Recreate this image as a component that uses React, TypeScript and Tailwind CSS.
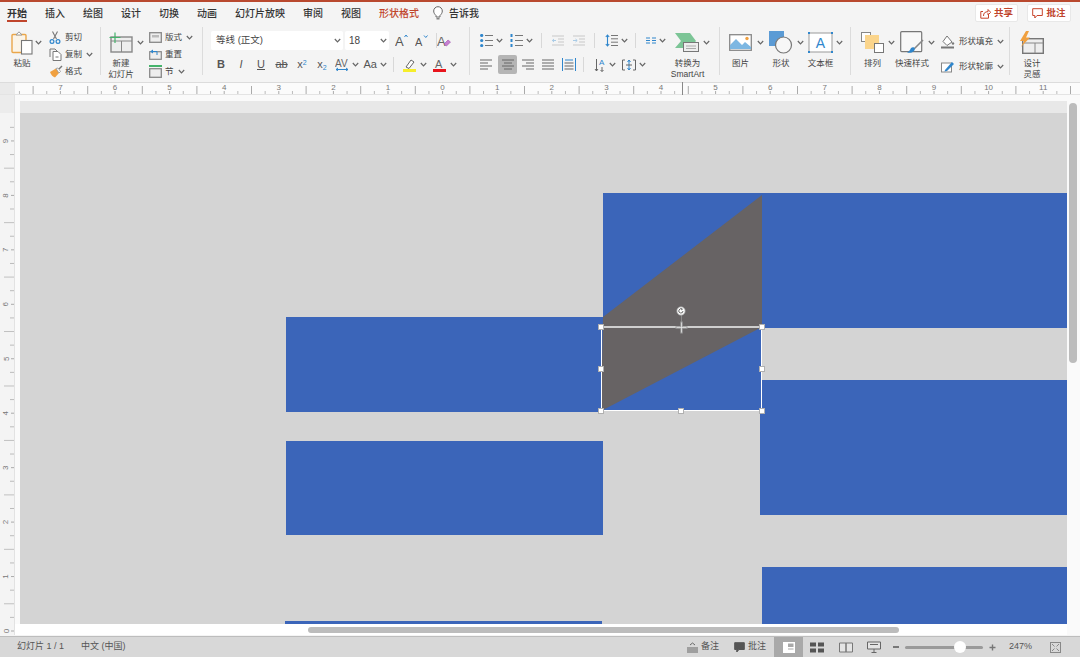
import React from "react";

const FONT = { fontFamily: '"Liberation Sans","Noto Sans CJK SC",sans-serif' };
const BLUE = "#2f86cc";
const G = "#777";

const Chev = ({ className = "", color = "#666" }: { className?: string; color?: string }) => (
  <svg width="7" height="5" viewBox="0 0 7 5" className={`shrink-0 ${className}`}>
    <path d="M0.8 1 L3.5 3.8 L6.2 1" fill="none" stroke={color} strokeWidth="1.2" />
  </svg>
);

const Ic = ({ w, h, children, className = "" }: { w: number; h: number; children: React.ReactNode; className?: string }) => (
  <svg width={w} height={h} viewBox={`0 0 ${w} ${h}`} className={`shrink-0 ${className}`}>
    {children}
  </svg>
);

/* ---- ribbon icons ---- */
const Paste = () => (
  <Ic w={22} h={24}>
    <rect x="1" y="3.5" width="14" height="18" rx="1" fill="#fbf4e8" stroke="#eaa64a" strokeWidth="1.4" />
    <path d="M5 4 L8 0.8 L11 4 Z" fill="#fff" stroke="#999" />
    <rect x="10.5" y="9.5" width="10.5" height="13.5" fill="#fff" stroke="#777" strokeWidth="1.1" />
  </Ic>
);
const Scissors = () => (
  <Ic w={12} h={13}>
    <path d="M3.5 0.5 L7.5 8 M8.5 0.5 L4.5 8" stroke="#777" strokeWidth="1.1" fill="none" />
    <circle cx="3" cy="10.5" r="1.9" fill="none" stroke={BLUE} strokeWidth="1.2" />
    <circle cx="9" cy="10.5" r="1.9" fill="none" stroke={BLUE} strokeWidth="1.2" />
  </Ic>
);
const Copy = () => (
  <Ic w={13} h={13}>
    <path d="M1 9 V1 H6 L8 3" fill="none" stroke="#777" />
    <path d="M4 3.5 H9 L12 6.5 V12.5 H4 Z" fill="#fff" stroke="#777" />
    <path d="M6.5 9 H9.5" stroke="#777" />
  </Ic>
);
const Painter = () => (
  <Ic w={14} h={13}>
    <path d="M1 7 L7 3.5 L10 8 L6 12.5 C4 12 2 10 1 7 Z" fill="#f0a040" />
    <path d="M7 3.5 L10 8 L11.5 6.5 L9 3 Z" fill="#fff" stroke="#888" strokeWidth="0.7" />
    <path d="M10 4 L13 1" stroke="#777" strokeWidth="1.5" />
  </Ic>
);
const NewSlide = () => (
  <Ic w={24} h={21}>
    <rect x="2" y="5" width="21" height="15" fill="#eee" stroke="#888" strokeWidth="1.4" />
    <path d="M2 9 H23 M12.5 9 V20" stroke="#888" />
    <path d="M6 0.5 V11 M0.5 5.5 H11.5" stroke="#45b36b" strokeWidth="1.2" />
  </Ic>
);
const Layout = () => (
  <Ic w={13} h={11}>
    <rect x="0.7" y="0.7" width="11.6" height="9.6" fill="#eee" stroke="#888" strokeWidth="1.3" />
    <rect x="3" y="3" width="7" height="2.5" fill="#bbb" />
  </Ic>
);
const Reset = () => (
  <Ic w={13} h={11}>
    <rect x="0.7" y="2.7" width="11.6" height="7.6" fill="#eee" stroke="#888" strokeWidth="1.2" />
    <path d="M1 2.5 L4 0.5 V4.5 Z" fill={BLUE} />
    <path d="M3 2.5 H8 V6" fill="none" stroke={BLUE} />
  </Ic>
);
const Section = () => (
  <Ic w={13} h={13}>
    <rect x="0.7" y="3.7" width="11.6" height="8.6" fill="#eee" stroke="#888" strokeWidth="1.3" />
    <rect x="0" y="0" width="13" height="2" fill="#45b36b" />
  </Ic>
);
const FontUp = ({ up }: { up: boolean }) => (
  <Ic w={13} h={13}>
    <text x="0" y={up ? 12 : 12} fontSize={up ? 13 : 11} fill="#555" fontFamily="Liberation Sans">A</text>
    <path d={up ? "M9.5 3 L11 1 L12.5 3" : "M9 1.5 L10.8 3.5 L12.5 1.5"} fill="none" stroke={BLUE} strokeWidth="1" />
  </Ic>
);
const ClearFmt = () => (
  <Ic w={14} h={13}>
    <text x="0" y="11.5" fontSize="13" fill="#666" fontFamily="Liberation Sans">A</text>
    <path d="M7 10 L11 6 L13.5 8 L9.5 12 Z" fill="#c77fd0" stroke="#a050b0" strokeWidth="0.6" />
  </Ic>
);
const Bullets = ({ num = false }: { num?: boolean }) => (
  <Ic w={13} h={13}>
    {[1.5, 6.5, 11.5].map((y) => (
      <g key={y}>
        {num ? <rect x="0.5" y={y - 1.5} width="2" height="3" fill={BLUE} /> : <circle cx="1.7" cy={y} r="1.6" fill={BLUE} />}
        <path d={`M5 ${y} H13`} stroke="#777" strokeWidth="1" />
      </g>
    ))}
  </Ic>
);
const Indent = ({ right = false }: { right?: boolean }) => (
  <Ic w={12} h={11}>
    <path d="M0 1 H12 M6 4 H12 M6 7 H12 M0 10 H12" stroke="#c8c8c8" strokeWidth="1" />
    <path d={right ? "M0 5.5 H4 M2.5 4 L4.2 5.5 L2.5 7" : "M4 5.5 H0.5 M2 4 L0.3 5.5 L2 7"} stroke="#a8cbe6" fill="none" />
  </Ic>
);
const LineSpace = () => (
  <Ic w={13} h={13}>
    <path d="M2.5 1 V12 M0.8 3 L2.5 1 L4.2 3 M0.8 10 L2.5 12 L4.2 10" fill="none" stroke={BLUE} strokeWidth="1.1" />
    <path d="M6 1.5 H13 M6 4.8 H13 M6 8.2 H13 M6 11.5 H13" stroke="#777" />
  </Ic>
);
const Cols = () => (
  <Ic w={10} h={7}>
    <path d="M0 1 H4 M0 3.5 H4 M0 6 H4 M6 1 H10 M6 3.5 H10 M6 6 H10" stroke={BLUE} />
  </Ic>
);
const SmartArt = () => (
  <Ic w={25} h={19}>
    <path d="M0 0 H15 L21 8 L15 15 H0 L6 8 Z" fill="#7cc596" />
    <rect x="8.5" y="9.5" width="15" height="9" fill="#eee" stroke="#777" />
    <path d="M11 13 H21 M11 15.5 H21" stroke="#aaa" />
  </Ic>
);
const Align = ({ kind }: { kind: "l" | "c" | "r" | "j" }) => {
  const rows = [0, 1, 2, 3];
  return (
    <Ic w={12} h={11}>
      {rows.map((i) => {
        const short = i % 2 === 1 && kind !== "j";
        const w = short ? 8 : 12;
        const x = kind === "r" ? 12 - w : kind === "c" ? (12 - w) / 2 : 0;
        return <path key={i} d={`M${x} ${1 + i * 3} h${w}`} stroke="#666" strokeWidth="1" />;
      })}
    </Ic>
  );
};
const Distribute = () => (
  <Ic w={14} h={13}>
    <path d="M0.5 0 V13 M13.5 0 V13" stroke={BLUE} />
    <path d="M3 2 H11" stroke={BLUE} />
    <path d="M2.5 5 H11.5 M2.5 8 H11.5 M2.5 11 H11.5" stroke="#666" />
  </Ic>
);
const TextDir = () => (
  <Ic w={12} h={14}>
    <path d="M2.5 1 V13 M1 11 L2.5 13 L4 11" fill="none" stroke="#666" />
    <text x="5" y="7" fontSize="8" fill={BLUE} fontFamily="Liberation Sans">A</text>
    <path d="M8 9 V13.5 M6.5 12 L8 13.5 L9.5 12" fill="none" stroke="#666" />
  </Ic>
);
const AlignText = () => (
  <Ic w={14} h={12}>
    <path d="M3 1 H0.5 V11 H3 M11 1 H13.5 V11 H11" fill="none" stroke="#666" />
    <path d="M7 1 V11 M5.5 3 L7 1 L8.5 3 M5.5 9 L7 11 L8.5 9" fill="none" stroke={BLUE} />
    <path d="M4 6 H10" stroke="#666" />
  </Ic>
);
const Picture = () => (
  <Ic w={23} h={17}>
    <rect x="0.7" y="0.7" width="21.6" height="15.6" fill="#fff" stroke="#888" strokeWidth="1.3" />
    <path d="M1 15 V11 L7 5 L13 11 L16 8 L22 13 V15 Z" fill="#7db7e2" />
    <circle cx="18" cy="4.5" r="1.7" fill="#f0a040" />
  </Ic>
);
const Shape = () => (
  <Ic w={24} h={23}>
    <rect x="0" y="0" width="15" height="15" fill="#5b9bd5" />
    <circle cx="14.5" cy="14" r="8" fill="#f7f7f7" stroke="#777" strokeWidth="1.2" />
  </Ic>
);
const TextBox = () => (
  <Ic w={25} h={21}>
    <rect x="1" y="1" width="23" height="19" fill="#fff" stroke="#999" />
    {[[1, 1], [24, 1], [1, 20], [24, 20]].map(([x, y]) => (
      <rect key={`${x}${y}`} x={x - 1} y={y - 1} width="2" height="2" fill={BLUE} />
    ))}
    <text x="12.5" y="16" textAnchor="middle" fontSize="14" fill={BLUE} fontFamily="Liberation Sans">A</text>
  </Ic>
);
const Arrange = () => (
  <Ic w={23} h={21}>
    <rect x="0.5" y="0.5" width="9" height="9" fill="#fff" stroke="#888" />
    <rect x="4" y="3" width="14" height="14" fill="#fbd58c" />
    <rect x="13.5" y="11.5" width="9" height="9" fill="#fff" stroke="#777" />
  </Ic>
);
const QuickStyle = () => (
  <Ic w={24} h={23}>
    <rect x="0.7" y="0.7" width="21" height="20" rx="1" fill="#f8f8f8" stroke="#777" strokeWidth="1.2" />
    <path d="M23 9 L14 18" stroke="#888" strokeWidth="1.6" />
    <path d="M11 17 C14 15 16 18 14 20 C12 22 9 22 7 21.5 C9 21 10 19 11 17 Z" fill={BLUE} />
  </Ic>
);
const Fill = () => (
  <Ic w={14} h={14}>
    <path d="M6 1 L11 7 L6 10.5 L2 6.5 Z" fill="#fff" stroke="#777" />
    <circle cx="12" cy="8.5" r="1.2" fill="#777" />
    <rect x="0" y="11.5" width="13" height="2" fill="#777" />
  </Ic>
);
const Outline = () => (
  <Ic w={14} h={13}>
    <rect x="0.5" y="3" width="10" height="9" fill="#fff" stroke="#888" />
    <path d="M4 10 L11 2 L13 4 L6 11 L3.5 11.5 Z" fill={BLUE} />
  </Ic>
);
const Ideas = () => (
  <Ic w={24} h={23}>
    <rect x="2.7" y="7.7" width="20.6" height="14.6" fill="#eee" stroke="#777" strokeWidth="1.4" />
    <path d="M4 12 H23 M15 12 V22" stroke="#888" />
    <path d="M6 0 L0 10 H4 L1 16 L10 6.5 H6 L9 0 Z" fill="#f0a040" />
  </Ic>
);
const Bulb = () => (
  <Ic w={10} h={14}>
    <path d="M3 9.5 C1.5 8 0.7 6.8 0.7 5 A4.3 4.3 0 0 1 9.3 5 C9.3 6.8 8.5 8 7 9.5 V11 H3 Z" fill="#fff" stroke="#666" />
    <path d="M3.5 12.8 H6.5" stroke="#666" strokeWidth="1.2" />
  </Ic>
);
const ShareIc = () => (
  <Ic w={11} h={11}>
    <path d="M3 3.5 H0.8 V10.2 H8.5 V7" fill="none" stroke="#c8452c" />
    <path d="M3.5 8 C3.5 5 5 3.7 8 3.7 V1.5 L10.7 4.3 L8 7 V5" fill="none" stroke="#c8452c" />
  </Ic>
);
const CommentIc = ({ color = "#c8452c", solid = false }: { color?: string; solid?: boolean }) => (
  <Ic w={11} h={11}>
    <path d="M0.7 0.7 H10.3 V7.5 H5 L2.8 10 V7.5 H0.7 Z" fill={solid ? color : "none"} stroke={color} />
  </Ic>
);

/* ---- ribbon layout helpers ---- */
const Sep = () => <div className="w-px h-[48px] bg-[#dcdcdc] shrink-0" />;
const Vsep = ({ className = "" }: { className?: string }) => <div className={`w-px h-[15px] bg-[#d8d8d8] shrink-0 ${className}`} />;

const Big = ({ w, icon, label, chevMl = "ml-[3px]", className = "" }: { w: string; icon: React.ReactNode; label: string[]; chevMl?: string; className?: string }) => (
  <div className={`flex shrink-0 ${className}`}>
    <div className={`flex flex-col items-center ${w}`}>
      <div className="h-[25px] flex items-center">{icon}</div>
      <div className="mt-[3px] flex flex-col items-center text-[8.5px] leading-[11px] text-[#444] whitespace-nowrap">
        {label.map((l) => (
          <span key={l}>{l}</span>
        ))}
      </div>
    </div>
    {chevMl !== "none" && (
      <div className={`h-[25px] flex items-center ${chevMl}`}>
        <Chev />
      </div>
    )}
  </div>
);

const Small = ({ icon, label, chev = false }: { icon: React.ReactNode; label: string; chev?: boolean }) => (
  <div className="h-[17px] flex items-center">
    <div className="w-[16px] shrink-0 flex items-center">{icon}</div>
    <span className="text-[8.5px] text-[#444] whitespace-nowrap">{label}</span>
    {chev && <Chev className="ml-[4px]" />}
  </div>
);

const Btn = ({ w, children, chev = false, active = false }: { w: string; children: React.ReactNode; chev?: boolean; active?: boolean }) => (
  <div className={`flex items-center shrink-0 ${w}`}>
    <div className={`flex items-center justify-center rounded-[2px] h-[19px] ${active ? "w-[19px] bg-[#b5b5b5]" : ""}`}>{children}</div>
    {chev && <Chev className="ml-[3px]" />}
  </div>
);

const T = ({ children, className = "" }: { children: React.ReactNode; className?: string }) => (
  <span className={`text-[11px] leading-none text-[#555] ${className}`}>{children}</span>
);

/* ---- rulers ---- */
const TopRuler = () => {
  const unit = 54.6;
  const zero = 442.6;
  const ticks: React.ReactNode[] = [];
  for (let q = -31; q <= 48; q++) {
    const x = zero + (q * unit) / 4;
    if (x < 16 || x > 1078) continue;
    if (q % 4 === 0) {
      ticks.push(<path key={q} d={`M${x} 91 V94`} stroke="#aaa" />);
      ticks.push(
        <text key={`t${q}`} x={x} y="90" textAnchor="middle" fontSize="8" fill="#777">
          {Math.abs(q / 4)}
        </text>
      );
    } else if (q % 2 === 0) {
      ticks.push(<path key={q} d={`M${x} 86 V94`} stroke="#aaa" />);
    } else {
      ticks.push(<path key={q} d={`M${x} 91 V94`} stroke="#bbb" />);
    }
  }
  return (
    <svg width="1080" height="13" viewBox="0 82 1080 13" className="block shrink-0" style={FONT}>
      <rect x="0" y="82" width="15" height="13" fill="#eaeaea" />
      <rect x="15" y="82" width="1065" height="13" fill="#fbfbfb" />
      <path d="M0 82.5 H1080" stroke="#dcdcdc" />
      <path d="M0 94.5 H1080" stroke="#e4e4e4" />
      {ticks}
      <path d="M682.5 82 V95" stroke="#888" />
    </svg>
  );
};

const LeftRuler = () => {
  const unit = 54.45;
  const zero = 631;
  const ticks: React.ReactNode[] = [];
  for (let q = 0; q <= 38; q++) {
    const y = zero - (q * unit) / 4;
    if (y < 114) continue;
    if (q % 4 === 0) {
      ticks.push(<path key={q} d={`M11 ${y} H14`} stroke="#aaa" />);
      ticks.push(
        <text key={`t${q}`} x="6" y={y} fontSize="8" fill="#777" textAnchor="middle" dominantBaseline="central" transform={`rotate(-90 6 ${y})`}>
          {q / 4}
        </text>
      );
    } else if (q % 2 === 0) {
      ticks.push(<path key={q} d={`M4 ${y} H14`} stroke="#c0c0c0" />);
    } else {
      ticks.push(<path key={q} d={`M10 ${y} H14`} stroke="#bbb" />);
    }
  }
  return (
    <svg width="15" height="540" viewBox="0 95 15 540" className="block shrink-0" style={FONT}>
      <rect x="0" y="95" width="15" height="18" fill="#ececec" />
      <rect x="0" y="113" width="15" height="522" fill="#f4f4f4" />
      <path d="M14.5 95 V635" stroke="#e2e2e2" />
      {ticks}
    </svg>
  );
};

/* ---- slide shapes ---- */
const Handle = ({ className }: { className: string }) => (
  <div className={`absolute w-[6px] h-[6px] bg-white border border-[#b0b0b0] ${className}`} />
);

export default function App() {
  return (
    <div className="w-[1080px] h-[657px] overflow-hidden flex flex-col bg-[#f4f4f4] text-[#333]" style={FONT}>
      {/* Tabs */}
      <div className="h-[27px] shrink-0 flex items-start border-t-2 border-[#b9492f] bg-[#f4f4f4]">
        <div className="flex items-center h-[22px] pl-[7px] gap-[18px] text-[10px] text-[#333] font-medium">
          <div className="relative h-full flex items-center">
            <span className="font-bold">开始</span>
            <div className="absolute left-0 right-0 top-[18px] h-[2px] bg-[#c0452c]" />
          </div>
          <span>插入</span>
          <span>绘图</span>
          <span>设计</span>
          <span>切换</span>
          <span>动画</span>
          <span>幻灯片放映</span>
          <span>审阅</span>
          <span>视图</span>
          <span className="text-[#c0452c]">形状格式</span>
          <div className="flex items-center -ml-[4px] gap-[6px]">
            <Bulb />
            <span>告诉我</span>
          </div>
        </div>
        <div className="ml-auto mr-[9px] mt-[2px] flex gap-[9px]">
          <div className="w-[43px] h-[18px] bg-white rounded-[2px] border border-[#e8e8e8] flex items-center justify-center gap-[3px] text-[9.5px] font-bold text-[#c0452c]">
            <ShareIc />
            <span>共享</span>
          </div>
          <div className="w-[44px] h-[18px] bg-white rounded-[2px] border border-[#e8e8e8] flex items-center justify-center gap-[3px] text-[9.5px] font-bold text-[#c0452c]">
            <CommentIc />
            <span>批注</span>
          </div>
        </div>
      </div>

      {/* Ribbon */}
      <div className="h-[55px] shrink-0 flex items-start bg-[#f4f4f4]">
        {/* clipboard */}
        <div className="w-[100px] shrink-0 pl-[11px] pt-[3px] flex">
          <Big w="w-[22px]" icon={<Paste />} label={["粘贴"]} chevMl="ml-[2px]" />
          <div className="ml-[7px] -mt-[1px]">
            <Small icon={<Scissors />} label="剪切" />
            <Small icon={<Copy />} label="复制" chev />
            <Small icon={<Painter />} label="格式" />
          </div>
        </div>
        <Sep />
        {/* slides */}
        <div className="w-[101px] shrink-0 pl-[8px] pt-[3px] flex">
          <Big w="w-[24px]" icon={<NewSlide />} label={["新建", "幻灯片"]} chevMl="ml-[4px]" />
          <div className="ml-[5px] -mt-[1px]">
            <Small icon={<Layout />} label="版式" chev />
            <Small icon={<Reset />} label="重置" />
            <Small icon={<Section />} label="节" chev />
          </div>
        </div>
        <Sep />
        {/* font */}
        <div className="w-[266px] shrink-0 pl-[8px] pt-[4px] flex flex-col">
          <div className="h-[19px] flex items-center">
            <div className="w-[132px] h-[19px] bg-white rounded-[2px] flex items-center justify-between pl-[5px] pr-[2px] text-[9.5px] text-[#444]">
              <span>等线 (正文)</span>
              <Chev />
            </div>
            <div className="ml-[2px] w-[44px] h-[19px] bg-white rounded-[2px] flex items-center justify-between pl-[4px] pr-[2px] text-[10px] text-[#444]">
              <span>18</span>
              <Chev />
            </div>
            <div className="ml-[6px] flex items-center gap-[7px]">
              <FontUp up />
              <FontUp up={false} />
            </div>
            <Vsep className="ml-[8px]" />
            <ClearFmt />
          </div>
          <div className="mt-[5px] h-[19px] flex items-center">
            <Btn w="w-[20px] justify-center"><T className="font-bold">B</T></Btn>
            <Btn w="w-[20px] justify-center"><T className="italic">I</T></Btn>
            <Btn w="w-[20px] justify-center"><T className="underline">U</T></Btn>
            <Btn w="w-[21px] justify-center"><T className="line-through">ab</T></Btn>
            <Btn w="w-[20px] justify-center">
              <T>x<sup className="text-[7px] text-[#2f86cc]">2</sup></T>
            </Btn>
            <Btn w="w-[20px] justify-center">
              <T>x<sub className="text-[7px] text-[#2f86cc]">2</sub></T>
            </Btn>
            <Btn w="w-[29px] justify-center" chev>
              <Ic w={14} h={13}>
                <text x="0" y="8.5" fontSize="10" fill="#666" fontFamily="Liberation Sans">AV</text>
                <path d="M1 11.5 H13 M3 10 L1 11.5 L3 13 M11 10 L13 11.5 L11 13" stroke={BLUE} fill="none" />
              </Ic>
            </Btn>
            <Btn w="w-[26px] justify-end" chev><T>Aa</T></Btn>
            <Vsep className="ml-[6px]" />
            <div className="ml-[9px] flex items-center">
              <Ic w={13} h={14}>
                <path d="M3 9 L8 2 L11 4 L6 10.5 Z" fill="#fff" stroke="#666" />
                <rect x="0" y="11" width="13" height="3" fill="#f6ee2b" />
              </Ic>
              <Chev className="ml-[4px]" />
            </div>
            <div className="ml-[6px] flex items-center">
              <Ic w={13} h={14}>
                <text x="2" y="10" fontSize="11" fill="#666" fontFamily="Liberation Sans">A</text>
                <rect x="0" y="11" width="13" height="3" fill="#e8141c" />
              </Ic>
              <Chev className="ml-[4px]" />
            </div>
          </div>
        </div>
        <Sep />
        {/* paragraph */}
        <div className="w-[249px] shrink-0 pl-[10px] pt-[4px] flex">
          <div className="flex flex-col w-[195px] shrink-0">
            <div className="h-[19px] flex items-center">
              <Btn w="w-[30px]" chev><Bullets /></Btn>
              <Btn w="w-[31px]" chev><Bullets num /></Btn>
              <Vsep />
              <div className="ml-[10px] flex gap-[9px]">
                <Indent />
                <Indent right />
              </div>
              <Vsep className="ml-[9px]" />
              <div className="ml-[10px]">
                <Btn w="w-[30px]" chev><LineSpace /></Btn>
              </div>
              <Vsep />
              <div className="ml-[10px]">
                <Btn w="w-[23px]" chev><Cols /></Btn>
              </div>
            </div>
            <div className="mt-[5px] h-[19px] flex items-center">
              <div className="w-[18px]"><Btn w="w-[12px]"><Align kind="l" /></Btn></div>
              <Btn w="w-[20px]" active><Align kind="c" /></Btn>
              <div className="w-[20px] flex justify-center"><Align kind="r" /></div>
              <div className="w-[20px] flex justify-center"><Align kind="j" /></div>
              <div className="w-[21px] flex justify-center"><Distribute /></div>
              <Vsep className="ml-[4px]" />
              <div className="ml-[10px]">
                <Btn w="w-[28px]" chev><TextDir /></Btn>
              </div>
              <div className="ml-[0px]">
                <Btn w="w-[28px]" chev><AlignText /></Btn>
              </div>
            </div>
          </div>
          <div className="flex -mt-[1px]">
            <Big w="w-[25px]" icon={<SmartArt />} label={["转换为", "SmartArt"]} chevMl="ml-[3px]" />
          </div>
        </div>
        <Sep />
        {/* insert */}
        <div className="w-[130px] shrink-0 pl-[9px] pt-[3px] flex">
          <Big w="w-[23px]" icon={<Picture />} label={["图片"]} chevMl="ml-[5px]" />
          <Big w="w-[24px]" icon={<Shape />} label={["形状"]} chevMl="ml-[4px]" className="ml-[5px]" />
          <Big w="w-[25px]" icon={<TextBox />} label={["文本框"]} chevMl="ml-[3px]" className="ml-[4px]" />
        </div>
        <Sep />
        {/* drawing */}
        <div className="w-[158px] shrink-0 pl-[10px] pt-[3px] flex">
          <Big w="w-[23px]" icon={<Arrange />} label={["排列"]} chevMl="ml-[4px]" />
          <Big w="w-[24px]" icon={<QuickStyle />} label={["快速样式"]} chevMl="ml-[4px]" className="ml-[5px]" />
          <div className="ml-[6px] flex flex-col pt-[2px]">
            <div className="h-[19px] flex items-center">
              <div className="w-[18px]"><Fill /></div>
              <span className="text-[8.5px] text-[#444] whitespace-nowrap">形状填充</span>
              <Chev className="ml-[4px]" />
            </div>
            <div className="mt-[6px] h-[19px] flex items-center">
              <div className="w-[18px]"><Outline /></div>
              <span className="text-[8.5px] text-[#444] whitespace-nowrap">形状轮廓</span>
              <Chev className="ml-[4px]" />
            </div>
          </div>
        </div>
        <Sep />
        {/* designer */}
        <div className="pl-[10px] pt-[3px] flex">
          <Big w="w-[24px]" icon={<Ideas />} label={["设计", "灵感"]} chevMl="none" />
        </div>
      </div>

      <TopRuler />

      {/* Work area */}
      <div className="h-[540px] shrink-0 flex bg-white">
        <LeftRuler />
        <div className="w-[1052px] shrink-0 flex flex-col bg-[#fafafa]">
          <div className="h-[18px] shrink-0 pt-[6px] pl-[5px]">
            <div className="h-[12px] bg-[#e8e8e8]" />
          </div>
          <div className="h-[511px] shrink-0 pl-[5px]">
            {/* free canvas: slide shapes sit at their own coordinates */}
            <div className="relative w-[1047px] h-[511px] bg-[#d4d4d4] overflow-hidden">
              <div className="absolute left-[583px] top-[80px] w-[464px] h-[135px] bg-[#3b65b9]" />
              <div className="absolute left-[266px] top-[204px] w-[317px] h-[95px] bg-[#3b65b9]" />
              <div className="absolute left-[266px] top-[328px] w-[317px] h-[94px] bg-[#3b65b9]" />
              <div className="absolute left-[740px] top-[267px] w-[307px] h-[135px] bg-[#3b65b9]" />
              <div className="absolute left-[742px] top-[454px] w-[305px] h-[57px] bg-[#3b65b9]" />
              <div className="absolute left-[265px] top-[508px] w-[317px] h-[3px] bg-[#3b65b9]" />
              <div className="absolute left-[581px] top-[214px] w-[161px] h-[84px] bg-[#3b65b9]" />
              <svg className="absolute left-0 top-0" width="1047" height="511" viewBox="0 0 1047 511">
                <polygon points="583,204 742,82 742,214 581,298" fill="#676364" />
              </svg>
              {/* selection */}
              <div className="absolute left-[581px] top-[214px] w-[161px] h-[84px] border border-white" />
              <div className="absolute left-[581px] top-[213px] w-[161px] h-[2px] bg-[#cfcfcf]" />
              <div className="absolute left-[661px] top-[198px] w-px h-[16px] bg-[#8a8a8a]" />
              <Handle className="left-[578px] top-[211px]" />
              <Handle className="left-[739px] top-[211px]" />
              <Handle className="left-[578px] top-[253px]" />
              <Handle className="left-[739px] top-[253px]" />
              <Handle className="left-[578px] top-[295px]" />
              <Handle className="left-[658px] top-[295px]" />
              <Handle className="left-[739px] top-[295px]" />
              <svg className="absolute left-[656px] top-[193px]" width="10" height="10" viewBox="0 0 10 10">
                <circle cx="5" cy="5" r="4.2" fill="#fff" stroke="#999" strokeWidth="0.8" />
                <path d="M7 5 A2.1 2.1 0 1 1 6 3.1" fill="none" stroke="#666" strokeWidth="1" />
                <path d="M5.2 2 L7 3 L5.6 4.4 Z" fill="#666" />
              </svg>
              <svg className="absolute left-[655px] top-[208px]" width="13" height="13" viewBox="0 0 13 13">
                <path d="M6.5 0.5 V12.5 M0.5 6.5 H12.5" stroke="#9a9a9a" strokeWidth="2.4" />
                <path d="M6.5 1.5 V11.5 M1.5 6.5 H11.5" stroke="#e4e4e4" strokeWidth="0.8" />
              </svg>
            </div>
          </div>
          <div className="h-[11px] shrink-0 pt-[3px] pl-[293px] bg-white">
            <div className="w-[591px] h-[6px] rounded-full bg-[#bcbcbc]" />
          </div>
        </div>
        <div className="w-[13px] shrink-0 pt-[8px] pl-[2px] bg-[#fafafa]">
          <div className="w-[8px] h-[260px] rounded-full bg-[#bcbcbc]" />
        </div>
      </div>

      {/* Status bar */}
      <div className="flex-1 border-t border-[#bdbdbd] mt-[1px] bg-[#d8d8d8] flex items-stretch text-[9px] text-[#555]">
        <div className="pl-[17px] flex items-center">幻灯片 1 / 1</div>
        <div className="pl-[17px] flex items-center">中文 (中国)</div>
        <div className="ml-auto flex items-center">
          <Ic w={11} h={11}>
            <path d="M3 3 L5.5 1 L8 3 M0 6 H11 M0 8 H11 M0 10 H11" fill="none" stroke="#666" />
          </Ic>
          <span className="ml-[3px]">备注</span>
          <div className="ml-[15px]"><CommentIc color="#555" solid /></div>
          <span className="ml-[3px]">批注</span>
          <div className="ml-[8px] w-[29px] h-full self-stretch bg-[#a9a9a9] flex items-center justify-center">
            <Ic w={12} h={11}>
              <rect x="0" y="0" width="12" height="11" fill="#fff" />
              <rect x="5" y="1.5" width="5.5" height="3.5" fill="#a9a9a9" />
              <rect x="5" y="6.5" width="5.5" height="1" fill="#a9a9a9" />
            </Ic>
          </div>
          <div className="ml-[7px]">
            <Ic w={14} h={11}>
              <rect x="0" y="0.5" width="6" height="4" fill="#555" />
              <rect x="8" y="0.5" width="6" height="4" fill="#555" />
              <rect x="0" y="6.5" width="6" height="4" fill="#555" />
              <rect x="8" y="6.5" width="6" height="4" fill="#555" />
            </Ic>
          </div>
          <div className="ml-[15px]">
            <Ic w={14} h={11}>
              <path d="M0.5 1 H7 V10 H0.5 Z M7 1 H13.5 V10 H7 Z" fill="#e4e4e4" stroke="#777" />
            </Ic>
          </div>
          <div className="ml-[14px]">
            <Ic w={14} h={12}>
              <path d="M0.5 1 H13.5 V8 H0.5 Z" fill="#e4e4e4" stroke="#666" />
              <path d="M7 8 V11.5 M4.5 11.5 H9.5 M3 3.5 H11" stroke="#666" />
            </Ic>
          </div>
          <div className="ml-[12px] w-[6px] h-[2px] bg-[#777]" />
          <div className="ml-[6px] relative w-[78px] h-[3px] rounded-full bg-[#9a9a9a]">
            <div className="absolute left-[49px] -top-[5px] w-[12px] h-[12px] rounded-full bg-white" />
          </div>
          <div className="ml-[6px]">
            <Ic w={7} h={7}>
              <path d="M3.5 0.5 V6.5 M0.5 3.5 H6.5" stroke="#777" strokeWidth="1.4" />
            </Ic>
          </div>
          <span className="ml-[13px] w-[27px]">247%</span>
          <div className="ml-[14px] mr-[19px]">
            <Ic w={11} h={11}>
              <rect x="0.5" y="0.5" width="10" height="10" fill="none" stroke="#888" />
              <path d="M2 2 L4.5 4.5 M9 2 L6.5 4.5 M2 9 L4.5 6.5 M9 9 L6.5 6.5" stroke="#888" />
            </Ic>
          </div>
        </div>
      </div>
    </div>
  );
}
